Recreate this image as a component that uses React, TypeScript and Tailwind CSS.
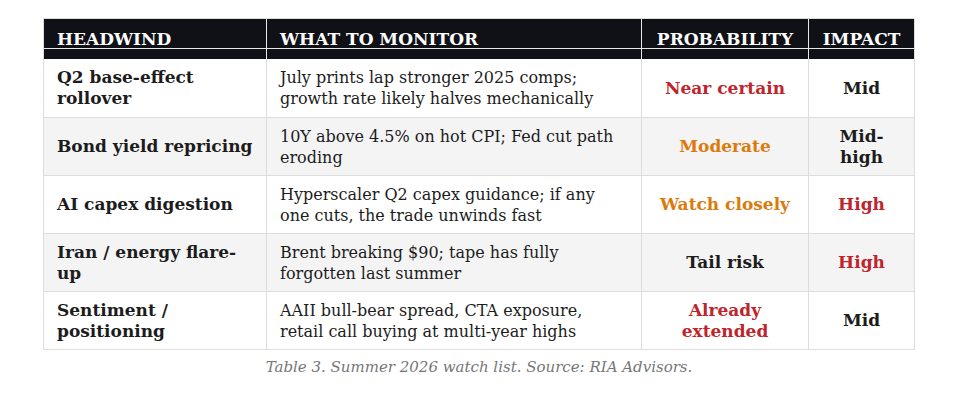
import React from 'react';

type Row = {
  headwind: string[];
  monitor: string[];
  probability: string[];
  probTone: 'red' | 'orange' | 'dark';
  impact: string[];
  impactTone: 'red' | 'dark';
};

const rows: Row[] = [
  {
    headwind: ['Q2 base-effect', 'rollover'],
    monitor: ['July prints lap stronger 2025 comps;', 'growth rate likely halves mechanically'],
    probability: ['Near certain'],
    probTone: 'red',
    impact: ['Mid'],
    impactTone: 'dark',
  },
  {
    headwind: ['Bond yield repricing'],
    monitor: ['10Y above 4.5% on hot CPI; Fed cut path', 'eroding'],
    probability: ['Moderate'],
    probTone: 'orange',
    impact: ['Mid-', 'high'],
    impactTone: 'dark',
  },
  {
    headwind: ['AI capex digestion'],
    monitor: ['Hyperscaler Q2 capex guidance; if any', 'one cuts, the trade unwinds fast'],
    probability: ['Watch closely'],
    probTone: 'orange',
    impact: ['High'],
    impactTone: 'red',
  },
  {
    headwind: ['Iran / energy flare-', 'up'],
    monitor: ['Brent breaking $90; tape has fully', 'forgotten last summer'],
    probability: ['Tail risk'],
    probTone: 'dark',
    impact: ['High'],
    impactTone: 'red',
  },
  {
    headwind: ['Sentiment /', 'positioning'],
    monitor: ['AAII bull-bear spread, CTA exposure,', 'retail call buying at multi-year highs'],
    probability: ['Already', 'extended'],
    probTone: 'red',
    impact: ['Mid'],
    impactTone: 'dark',
  },
];

const toneClass = {
  red: 'text-[#c0242b]',
  orange: 'text-[#dd7a0c]',
  dark: 'text-[#1c1c1c]',
};

const Lines = ({ lines }: { lines: string[] }) => (
  <div>
    {lines.map((l) => (
      <div key={l} className="whitespace-nowrap">
        {l}
      </div>
    ))}
  </div>
);

export default function App() {
  return (
    <div className="w-[958px] h-[401px] bg-white pt-[18px] pl-[43px] font-['DejaVu_Serif',Georgia,serif]">
      <div className="w-[872px] border border-[#dddddd]">
        {/* header */}
        <div className="flex bg-[#0f1117] text-white font-bold text-[17px] leading-[20px] uppercase h-[40px]">
          <div className="w-[222px]">
            <div className="h-[30px] pt-[10px] pl-[13px] border-b border-[#e8e8e8]">Headwind</div>
          </div>
          <div className="w-[375px] border-l border-[#e8e8e8]">
            <div className="h-[30px] pt-[10px] pl-[13px] border-b border-[#e8e8e8]">What to monitor</div>
          </div>
          <div className="w-[167px] border-l border-[#e8e8e8]">
            <div className="h-[30px] pt-[10px] border-b border-[#e8e8e8] text-center">Probability</div>
          </div>
          <div className="w-[106px] border-l border-[#e8e8e8]">
            <div className="h-[30px] pt-[10px] border-b border-[#e8e8e8] text-center">Impact</div>
          </div>
        </div>

        {rows.map((r, i) => (
          <div
            key={r.headwind.join(' ')}
            className={`flex h-[58px] leading-[21px] ${i % 2 === 1 ? 'bg-[#f4f4f4]' : 'bg-white'} ${
              i === 0 ? '' : 'border-t border-[#dddddd]'
            }`}
          >
            <div className="w-[222px] pl-[13px] flex items-center font-bold text-[17px] text-[#1c1c1c]">
              <Lines lines={r.headwind} />
            </div>
            <div className="w-[375px] pl-[13px] flex items-center border-l border-[#dddddd] text-[16px] text-[#1c1c1c]">
              <Lines lines={r.monitor} />
            </div>
            <div
              className={`w-[167px] flex items-center justify-center text-center border-l border-[#dddddd] font-bold text-[17px] ${toneClass[r.probTone]}`}
            >
              <Lines lines={r.probability} />
            </div>
            <div
              className={`w-[106px] flex items-center justify-center text-center border-l border-[#dddddd] font-bold text-[17px] ${toneClass[r.impactTone]}`}
            >
              <Lines lines={r.impact} />
            </div>
          </div>
        ))}
      </div>
      <p className="w-[872px] text-center italic text-[#777777] text-[15px] mt-[6px]">
        Table 3. Summer 2026 watch list. Source: RIA Advisors.
      </p>
    </div>
  );
}
